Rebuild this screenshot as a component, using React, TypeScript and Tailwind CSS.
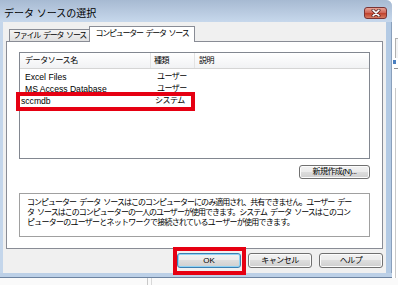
import React from 'react'

const font = "font-['Liberation_Sans','Noto_Sans_CJK_JP',sans-serif]"
const sp = '\u2002'

// Win7 風のボタン
function Btn({ children, w, def }: { children: React.ReactNode; w: string; def?: boolean }) {
  return (
    <div
      className={`${w} flex items-center justify-center rounded-[3px] border bg-[linear-gradient(#f2f2f2,#ebebeb_50%,#dddddd_50%,#cfcfcf)] text-[8px] leading-none text-black ${
        def ? 'border-[#3c7fb1] shadow-[inset_0_0_0_1px_#8fd3f5]' : 'border-[#707070] shadow-[inset_0_0_0_1px_#fcfcfc]'
      }`}
    >
      {children}
    </div>
  )
}

const rows = [
  { name: 'Excel Files', kind: 'ユーザー', pad: 'pl-[5px]', kpad: 'pl-[5px]' },
  { name: 'MS Access Database', kind: 'ユーザー', pad: 'pl-[5px]', kpad: 'pl-[5px]' },
  { name: 'sccmdb', kind: 'システム', pad: 'pl-[1px]', kpad: 'pl-[3px]' },
]

export default function App() {
  return (
    <div className={`relative flex h-[285px] w-[398px] flex-col overflow-hidden bg-white ${font}`}>
      <div className="flex h-[278px]">
        {/* ダイアログ本体 */}
        <div className="flex w-[392px] flex-col rounded-tr-[6px] border-b border-[#6d83a0] bg-[#bfd3ea]">
          {/* タイトルバー */}
          <div className="flex h-[22px] shrink-0 items-start rounded-tr-[6px] bg-gradient-to-b from-[#a7bad2] to-[#c7d8ec]">
            <span className="mt-[8px] pl-[4px] text-[10px] leading-[12px] text-black">データ ソースの選択</span>
            <div className="ml-auto mr-[5px] mt-[7px] flex h-[12px] w-[23px] items-center justify-center rounded-[3px] border border-[#7a3434] bg-[linear-gradient(#e8a395,#d0685a_45%,#c1442f_55%,#d77b62)]">
              <svg width="10" height="8" viewBox="0 0 10 8">
                <path d="M2 1.2 L8 6.8 M8 1.2 L2 6.8" stroke="#4b1d1d" strokeWidth="3" strokeLinecap="round" />
                <path d="M2 1.2 L8 6.8 M8 1.2 L2 6.8" stroke="#ffffff" strokeWidth="1.6" strokeLinecap="round" />
              </svg>
            </div>
          </div>

          <div className="flex h-[251px]">
            <div className="w-[3px] bg-[#c4d6eb]" />
            {/* クライアント領域 */}
            <div className="flex w-[383px] flex-col bg-[#f0f0f0] pt-[4px]">
              {/* タブ */}
              <div className="relative z-10 mb-[-1px] ml-[6px] flex h-[16px] items-end">
                <div className="flex h-[13px] w-[81px] items-center justify-center border border-[#898c95] bg-gradient-to-b from-[#f4f4f4] to-[#e0e0e0] text-[8px] leading-none tracking-[-1.2px] text-black">
                  {`ファイル${sp}データ${sp}ソース`}
                </div>
                <div className="-ml-[1px] flex h-[16px] w-[106px] items-center justify-center border border-b-0 border-[#898c95] bg-white pb-[1px] text-[8px] leading-none tracking-[-1.25px] text-black">
                  {`コンピューター${sp}データ${sp}ソース`}
                </div>
              </div>

              {/* タブパネル */}
              <div className="mx-[3px] flex h-[208px] flex-col border border-[#898c95] bg-white px-[12px] pt-[10px]">
                {/* リスト */}
                <div className="flex h-[107px] flex-col border border-[#828790] bg-white">
                  <div className="flex h-[16px] border-b border-[#d5d5d5] bg-gradient-to-b from-white to-[#f1f2f4] text-[8px] leading-[15px] tracking-[-0.4px] text-black">
                    <div className="w-[131px] border-r border-[#e3e3e3] pl-[5px]">データソース名</div>
                    <div className="w-[44px] border-r border-[#e3e3e3] pl-[3px]">種類</div>
                    <div className="pl-[4px]">説明</div>
                  </div>
                  <div className="flex flex-col pt-[2px]">
                    {rows.map((r) => (
                      <div key={r.name} className="flex h-[12px] text-[8.6px] leading-[12px] text-black">
                        <div className={`w-[132px] ${r.pad}`}>{r.name}</div>
                        <div className={`${r.kpad} text-[8px] tracking-[-0.5px]`}>{r.kind}</div>
                      </div>
                    ))}
                  </div>
                </div>

                <div className="mt-[6px] flex justify-end">
                  <Btn w="w-[71px] h-[14px] tracking-[-0.6px]">新規作成(N)...</Btn>
                </div>

                {/* 説明 */}
                <div className="mt-[14px] flex h-[44px] flex-col border border-[#a0a0a0] bg-white pl-[7px] pt-[4px] text-[8px] leading-[10px] whitespace-nowrap text-black">
                  <div className="tracking-[-0.98px]">
                    {`コンピューター${sp}データ${sp}ソースはこのコンピューターにのみ適用され、共有できません。ユーザー${sp}デー`}
                  </div>
                  <div className="tracking-[-0.98px]">
                    {`タ${sp}ソースはこのコンピューターの一人のユーザーが使用できます。システム${sp}データ${sp}ソースはこのコン`}
                  </div>
                  <div className="tracking-[-0.75px]">
                    ピューターのユーザーとネットワークで接続されているユーザーが使用できます。
                  </div>
                </div>
              </div>

              {/* ボタン行 */}
              <div className="mt-[4px] flex justify-end gap-[7px] pr-[3px]">
                <Btn w="w-[64px] h-[15px]" def>
                  OK
                </Btn>
                <Btn w="w-[64px] h-[15px] tracking-[-0.5px]">キャンセル</Btn>
                <Btn w="w-[64px] h-[15px] tracking-[-0.5px]">ヘルプ</Btn>
              </div>
            </div>
            <div className="w-[6px] border-r border-[#8aa0bc] bg-[#b3cae4]" />
          </div>
          <div className="h-[4px] bg-[#bcd0e7]" />
        </div>

        {/* 背後のウィンドウ */}
        <div className="flex w-[6px] flex-col bg-white">
          <div className="ml-[3px] mt-[38px] h-[20px] border-l border-t border-[#b0b0b0] bg-[#f4f4f4]" />
          <div className="ml-[1px] mt-[2px] h-[4px] w-[3px] bg-[#4a7fc0]" />
          <div className="ml-[2px] mt-[4px] h-[12px] w-[4px] border-t border-[#909090]" />
          <div className="ml-[3px] mt-[8px] flex-1 border-l border-[#c8c8c8]" />
        </div>
      </div>

      {/* 下端 */}
      <div className="flex h-[7px] bg-[#fafafa]">
        <div className="ml-[147px] w-px bg-[#c8c8c8]" />
        <div className="ml-[3px] w-px bg-[#d8d8d8]" />
      </div>

      {/* 赤枠の強調 */}
      <div className="absolute left-[16px] top-[92px] h-[19px] w-[179px] border-4 border-[#e60012]" />
      <div className="absolute left-[173px] top-[247px] h-[28px] w-[73px] border-4 border-[#e60012]" />
    </div>
  )
}
